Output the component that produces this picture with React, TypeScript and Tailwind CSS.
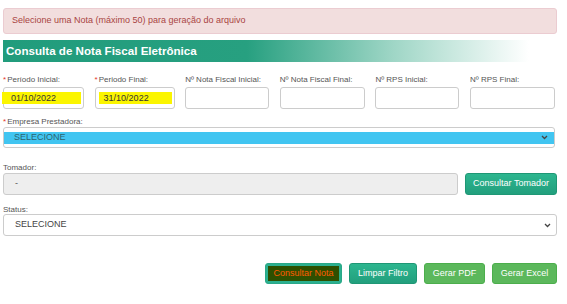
import React from "react";

const Chevron = () => (
    <svg width="7" height="5" viewBox="0 0 7 5" className="shrink-0">
        <polyline points="1,1 3.5,3.5 6,1" fill="none" stroke="#444" strokeWidth="1.3" />
    </svg>
);

function Label({ text, required }: { text: string; required?: boolean }) {
    return (
        <div className="h-[9px] text-[8px] leading-[9px] text-[#555] whitespace-nowrap">
            {required && <span className="text-[#e4342a] mr-[1px]">*</span>}
            {text}
        </div>
    );
}

export default function App() {
    const fields = [
        { label: "Período Inicial:", required: true, value: "01/10/2022" },
        { label: "Periodo Final:", required: true, value: "31/10/2022" },
        { label: "Nº Nota Fiscal Inicial:" },
        { label: "Nº Nota Fiscal Final:" },
        { label: "Nº RPS Inicial:" },
        { label: "Nº RPS Final:" },
    ];

    return (
        <div className="w-[567px] h-[304px] bg-white px-[3px] pt-[8px] font-['Liberation_Sans',Arial,sans-serif] overflow-hidden">
            {/* alert */}
            <div className="h-[26px] w-[554px] bg-[#f2dede] border border-[#ebccd1] rounded-[3px] flex items-center pl-[8px] text-[9px] text-[#a94442]">
                Selecione uma Nota (máximo 50) para geração do arquivo
            </div>

            {/* title bar */}
            <div className="mt-[6px] h-[22px] w-[542px] bg-[linear-gradient(to_right,#219c7c_0%,#27a080_45%,#9fd6c6_72%,#ffffff_97%)] flex items-center pl-[3px] text-white text-[11.6px] font-bold">
                Consulta de Nota Fiscal Eletrônica
            </div>

            {/* first row */}
            <div className="mt-[13px] w-[552px] grid grid-cols-[81px_80px_84px_85px_84px_85px] gap-x-[10.6px]">
                {fields.map((f, i) => (
                    <div key={i}>
                        <Label text={f.label} required={f.required} />
                        <div className="mt-[3px] h-[22px] border border-[#cccccc] rounded-[3px] flex items-center text-[9px] text-[#333]">
                            {f.value && (
                                <span
                                    className={`h-[12px] leading-[12px] bg-[#fbf500] ${i === 0 ? "-ml-[2px] pl-[9px] w-[79px]" : "ml-[3px] pl-[5px] w-[73px]"}`}
                                >
                                    {f.value}
                                </span>
                            )}
                        </div>
                    </div>
                ))}
            </div>

            {/* empresa */}
            <div className="mt-[8px] w-[552px]">
                <Label text="Empresa Prestadora:" required />
                <div className="mt-[1px] h-[21px] border border-[#cccccc] rounded-[3px] flex items-center">
                    <div className="h-[12px] w-full bg-[#41c5f1] flex items-center justify-between pl-[10px] pr-[6px] text-[9px] text-[#2c6470]">
                        <span>SELECIONE</span>
                        <Chevron />
                    </div>
                </div>
            </div>

            {/* tomador */}
            <div className="mt-[15px] w-[554px]">
                <Label text="Tomador:" />
                <div className="mt-[1px] flex gap-[7px]">
                    <div className="h-[22px] w-[455px] bg-[#eeeeee] border border-[#cccccc] rounded-[3px] flex items-center pl-[11px] text-[9px] text-[#555]">
                        -
                    </div>
                    <button className="h-[22px] flex-1 rounded-[3px] bg-[linear-gradient(to_bottom,#2db68f,#229f7d)] border border-[#1f9775] text-white text-[9px]">
                        Consultar Tomador
                    </button>
                </div>
            </div>

            {/* status */}
            <div className="mt-[10px] w-[554px]">
                <Label text="Status:" />
                <div className="h-[22px] border border-[#cccccc] rounded-[3px] flex items-center justify-between pl-[11px] pr-[5px] text-[9px] text-[#444]">
                    <span>SELECIONE</span>
                    <Chevron />
                </div>
            </div>

            {/* actions */}
            <div className="mt-[27px] w-[554px] flex justify-end gap-[7px]">
                <button className="h-[21px] w-[77px] rounded-[3px] bg-[#2bb08f] border border-[#2aa888] p-[2px]">
                    <span className="block h-full w-full bg-[#2e4f00] text-[#ff5a00] text-[9px] leading-[15px]">
                        Consultar Nota
                    </span>
                </button>
                <button className="h-[21px] w-[68px] rounded-[3px] bg-[linear-gradient(to_bottom,#2db68f,#229f7d)] border border-[#1f9775] text-white text-[9px]">
                    Limpar Filtro
                </button>
                <button className="h-[21px] w-[61px] rounded-[3px] bg-[#5cb85c] border border-[#4cae4c] text-white text-[9px]">
                    Gerar PDF
                </button>
                <button className="h-[21px] w-[65px] rounded-[3px] bg-[#5cb85c] border border-[#4cae4c] text-white text-[9px]">
                    Gerar Excel
                </button>
            </div>
        </div>
    );
}
